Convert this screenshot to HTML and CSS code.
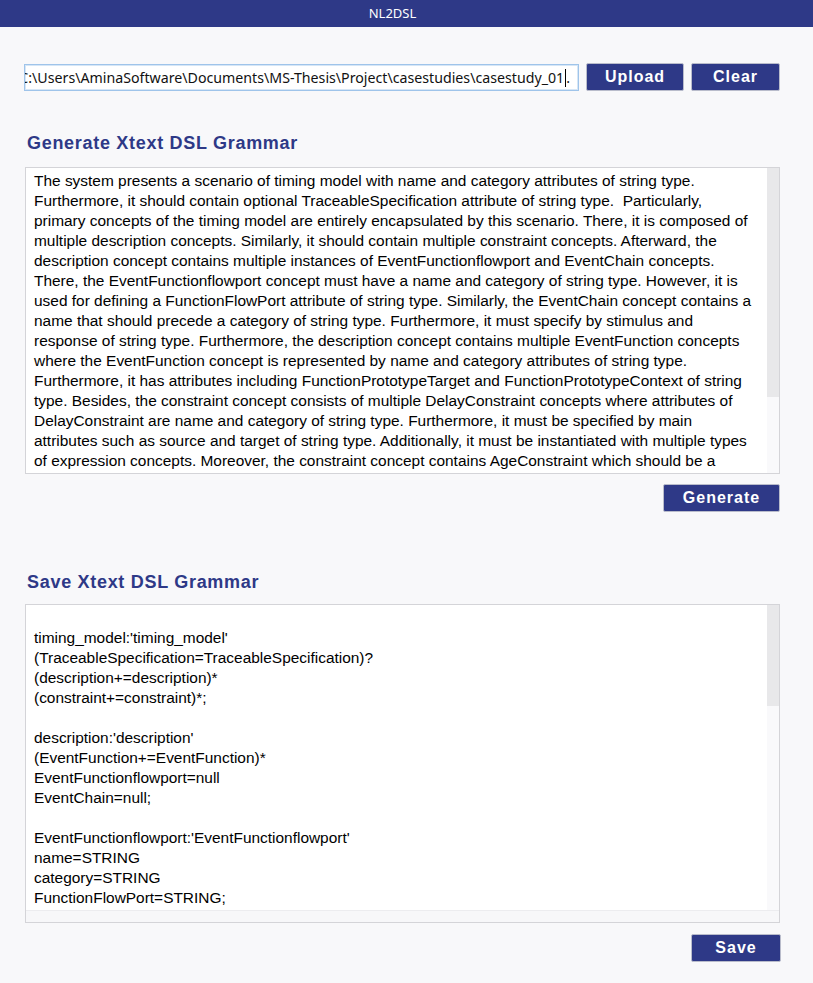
FILE: index.html
```html
<!DOCTYPE html>
<html>
<head>
<meta charset="utf-8">
<title>NL2DSL</title>
<link rel="stylesheet" href="styles.css">
</head>
<body>
<header class="topbar">NL2DSL</header>
<main class="page">
  <div class="upload-row">
    <div class="path-input"><span class="path-text">C:\Users\AminaSoftware\Documents\MS-Thesis\Project\casestudies\casestudy_01<span class="caret"></span>.</span></div>
    <button class="btn btn-upload">Upload</button>
    <button class="btn btn-clear">Clear</button>
  </div>

  <h2 class="section-title title-generate">Generate Xtext DSL Grammar</h2>
  <div class="textbox textbox-nl">
    <div class="textbox-content">The system presents a scenario of timing model with name and category attributes of string type.
Furthermore, it should contain optional TraceableSpecification attribute of string type.&nbsp; Particularly,
primary concepts of the timing model are entirely encapsulated by this scenario. There, it is composed of
multiple description concepts. Similarly, it should contain multiple constraint concepts. Afterward, the
description concept contains multiple instances of EventFunctionflowport and EventChain concepts.
There, the EventFunctionflowport concept must have a name and category of string type. However, it is
used for defining a FunctionFlowPort attribute of string type. Similarly, the EventChain concept contains a
name that should precede a category of string type. Furthermore, it must specify by stimulus and
response of string type. Furthermore, the description concept contains multiple EventFunction concepts
where the EventFunction concept is represented by name and category attributes of string type.
Furthermore, it has attributes including FunctionPrototypeTarget and FunctionPrototypeContext of string
type. Besides, the constraint concept consists of multiple DelayConstraint concepts where attributes of
DelayConstraint are name and category of string type. Furthermore, it must be specified by main
attributes such as source and target of string type. Additionally, it must be instantiated with multiple types
of expression concepts. Moreover, the constraint concept contains AgeConstraint which should be a</div>
    <div class="scrollbar"><div class="thumb thumb-nl"></div></div>
  </div>
  <div class="action-row">
    <button class="btn btn-generate">Generate</button>
  </div>

  <h2 class="section-title title-save">Save Xtext DSL Grammar</h2>
  <div class="textbox textbox-grammar">
    <div class="textbox-main">
      <div class="textbox-content">&nbsp;
timing_model:'timing_model'
(TraceableSpecification=TraceableSpecification)?
(description+=description)*
(constraint+=constraint)*;
&nbsp;
description:'description'
(EventFunction+=EventFunction)*
EventFunctionflowport=null
EventChain=null;
&nbsp;
EventFunctionflowport:'EventFunctionflowport'
name=STRING
category=STRING
FunctionFlowPort=STRING;</div>
      <div class="scrollbar"><div class="thumb thumb-grammar"></div></div>
    </div>
    <div class="hstrip"></div>
  </div>
  <div class="action-row action-save">
    <button class="btn btn-save">Save</button>
  </div>
</main>
</body>
</html>
```

FILE: styles.css
```css
html, body {
  margin: 0;
  padding: 0;
  background: #f8f8fa;
}

body {
  font-family: "Liberation Sans", Arial, sans-serif;
  color: #000;
}

.topbar {
  height: 27px;
  line-height: 27px;
  background: #2e3987;
  color: #ffffff;
  text-align: center;
  font-family: "Noto Sans", "Open Sans", sans-serif;
  font-size: 13px;
  padding-right: 28px;
}

.page {
  padding: 0 33px 0 25px;
}

.upload-row {
  display: flex;
  align-items: flex-start;
  margin-top: 36px;
  margin-left: -1px;
}

.path-input {
  box-sizing: border-box;
  width: 555px;
  height: 27px;
  border: 1px solid #9fc4ea;
  box-shadow: inset 0 0 0 1px #d6e6f6;
  background: #fff;
  display: flex;
  justify-content: flex-end;
  align-items: center;
  overflow: hidden;
  padding-right: 8px;
  margin-top: 1px;
}

.path-text {
  white-space: nowrap;
  font-family: "Noto Sans", "Open Sans", sans-serif;
  font-size: 14.2px;
  color: #111;
  display: flex;
  align-items: center;
  flex-shrink: 0;
}

.caret {
  display: inline-block;
  width: 1px;
  height: 18px;
  background: #000;
  margin: 0 0 0 1px;
}

.btn {
  box-sizing: border-box;
  height: 28px;
  background: #2e3987;
  color: #ffffff;
  border: 1px solid #b9bccb;
  border-radius: 2px;
  font-family: "Liberation Sans", Arial, sans-serif;
  font-weight: bold;
  font-size: 16px;
  letter-spacing: 1px;
  padding: 0;
  cursor: pointer;
}

.btn-upload {
  width: 98px;
  margin-left: 7px;
}

.btn-clear {
  width: 89px;
  margin-left: 7px;
}

.section-title {
  margin: 0;
  font-family: "Liberation Sans", Arial, sans-serif;
  font-weight: bold;
  font-size: 18px;
  line-height: 22px;
  letter-spacing: 0.7px;
  color: #2e3987;
  padding-left: 2px;
}

.title-generate {
  margin-top: 41px;
}

.title-save {
  margin-top: 59px;
}

.textbox {
  box-sizing: border-box;
  width: 755px;
  border: 1px solid #d4d4d8;
  background: #fff;
  display: flex;
}

.textbox-nl {
  height: 307px;
  margin-top: 13px;
}

.textbox-grammar {
  height: 319px;
  margin-top: 11px;
  flex-direction: column;
}

.textbox-main {
  display: flex;
  flex: 1;
  min-height: 0;
}

.textbox-content {
  flex: 1;
  min-width: 0;
  overflow: hidden;
  white-space: pre;
  font-size: 15.45px;
  line-height: 20px;
  padding: 3px 0 0 8px;
  color: #000;
}

.textbox-grammar .textbox-content {
  padding-top: 3px;
}

.scrollbar {
  width: 12px;
  background: #f9f9fb;
  display: flex;
  flex-direction: column;
}

.thumb {
  background: #e8e8ea;
}

.thumb-nl {
  height: 229px;
}

.thumb-grammar {
  height: 101px;
}

.hstrip {
  height: 11px;
  background: #f7f7f9;
  border-top: 1px solid #ececef;
}

.action-row {
  display: flex;
  justify-content: flex-end;
  margin-top: 10px;
}

.btn-generate {
  width: 117px;
  margin-right: 0;
}

.btn-save {
  width: 90px;
  margin-right: -1px;
}

.action-save {
  margin-top: 11px;
}
```
